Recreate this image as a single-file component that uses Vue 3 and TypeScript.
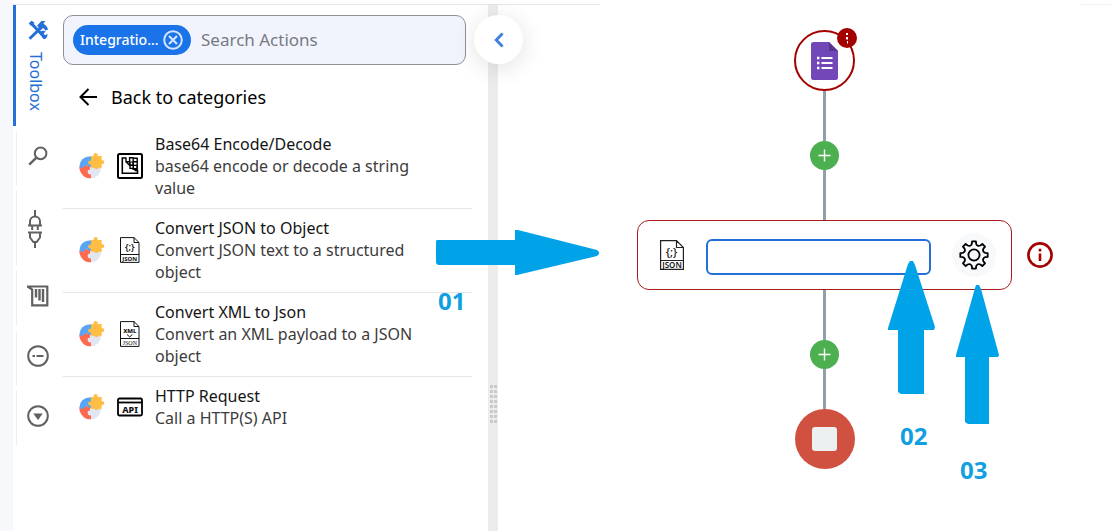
<script setup lang="ts">
import { ref } from 'vue'

interface Action {
  title: string
  description: string
  icon: 'base64' | 'json' | 'xml' | 'api'
}

const actions: Action[] = [
  { title: 'Base64 Encode/Decode', description: 'base64 encode or decode a string value', icon: 'base64' },
  { title: 'Convert JSON to Object', description: 'Convert JSON text to a structured object', icon: 'json' },
  { title: 'Convert XML to Json', description: 'Convert an XML payload to a JSON object', icon: 'xml' },
  { title: 'HTTP Request', description: 'Call a HTTP(S) API', icon: 'api' },
]

const search = ref('')
const stepName = ref('')

function gearOutline(teeth: number, outer: number, inner: number): string {
  const point = (radius: number, degrees: number): string => {
    const a = (degrees * Math.PI) / 180
    return `${(15 + radius * Math.sin(a)).toFixed(2)} ${(15 - radius * Math.cos(a)).toFixed(2)}`
  }
  const step = 360 / teeth
  let d = ''
  for (let i = 0; i < teeth; i++) {
    const c = i * step
    d += `${i === 0 ? 'M' : 'L'}${point(outer, c - 8)}L${point(outer, c + 8)}L${point(inner + 1, c + 11)}`
    d += `Q${point(inner - 1.6, c + step / 2)} ${point(inner + 1, c + step - 11)}`
  }
  return d + 'Z'
}

const gearPath = gearOutline(8, 13.8, 10.4)
</script>

<template>
  <div class="page">
    <div class="edge"></div>
    <div class="workspace">
      <div class="topline"><span class="rule"></span><span class="rule-end"></span></div>
      <div class="body">
        <nav class="rail" aria-label="Panels">
          <button class="tab active" type="button">
            <svg width="20" height="20" viewBox="0 0 20 20" fill="none" stroke="#2470d8">
              <path d="M2.2 2.2 17.4 18.2" stroke-width="3" />
              <path d="M.8 3.4 3.6.8l3 2-3.4 3.2z" fill="#2470d8" stroke="none" />
              <path d="M1.6 18.8 12.6 8" stroke-width="3" />
              <path d="M9.2 5.6 13.4 1h4l-2 2.4 3.6 3.4 1 3-2.6.6-2.2-2.4-3 2.4z" fill="#2470d8" stroke="none" />
              <path d="M12 12.6c1-2 4-2.4 5.6-1l-2 2 1.4 1.6 2.4-1.2c.4 3-1.6 5.4-4.4 4.8z" fill="#2470d8" stroke="none" />
            </svg>
            <span class="tab-text">Toolbox</span>
          </button>
          <button class="tab" type="button" aria-label="Search">
            <svg width="20" height="20" viewBox="0 0 20 20" fill="none" stroke="#616161" stroke-width="2">
              <circle cx="12.6" cy="7.4" r="5.8" />
              <path d="M8.4 11.6 1.2 18.6" stroke-width="2.4" />
            </svg>
          </button>
          <button class="tab tall" type="button" aria-label="Connections">
            <svg class="plug" width="14" height="38" viewBox="0 0 14 38" fill="none" stroke="#616161" stroke-width="2">
              <path d="M7 0v6M2 15v-3.5a5 5 0 0 1 10 0V15M0 15.4h14M4.2 16v4M9.8 16v4" />
              <path d="M0 22.6h14M2 23v4.5L5.4 32h3.2L12 27.5V23M7 32v6" />
            </svg>
          </button>
          <button class="tab" type="button" aria-label="Library">
            <svg width="22" height="22" viewBox="0 0 22 22" fill="none" stroke="#616161" stroke-width="2.2">
              <path d="M.5 1.5H20.3V20.3H5.2V4.6z" />
              <path d="M9 4v8.5M12.5 4v11.5M16 4v13" stroke-width="2.4" />
            </svg>
          </button>
          <button class="tab" type="button" aria-label="Variables">
            <svg width="22" height="22" viewBox="0 0 22 22" fill="none" stroke="#616161" stroke-width="2">
              <circle cx="11" cy="11" r="9.8" />
              <path d="M5.5 11H8M9.5 11h7" />
            </svg>
          </button>
          <button class="tab" type="button" aria-label="More">
            <svg width="22" height="22" viewBox="0 0 22 22" fill="none" stroke="#616161" stroke-width="2">
              <circle cx="11" cy="11" r="9.8" />
              <path d="M6.2 8.6h9.600L11 15z" fill="#616161" stroke="none" />
            </svg>
          </button>
        </nav>

        <section class="panel">
          <div class="search">
            <span class="chip">
              Integratio...
              <button class="chip-close" type="button" aria-label="Remove filter">
                <svg width="20" height="20" viewBox="0 0 20 20" fill="none" stroke="#d3e5fc" stroke-width="2">
                  <circle cx="10" cy="10" r="8.8" />
                  <path d="m6 6 8 8M14 6l-8 8" stroke-width="2.2" />
                </svg>
              </button>
            </span>
            <input v-model="search" class="search-input" type="text" placeholder="Search Actions" aria-label="Search Actions" />
          </div>

          <button class="back" type="button">
            <svg width="18" height="18" viewBox="0 0 18 18" fill="none" stroke="#000" stroke-width="2">
              <path d="M18 9H1.5M9.5 1 1.5 9l8 8" />
            </svg>
            Back to categories
          </button>

          <ul class="actions">
            <li v-for="action in actions" :key="action.title" class="action">
              <svg class="ball" width="26" height="26" viewBox="0 0 78 78">
                <path d="M36 76A34 34 0 0 1 1 42q6-5 11-2 2-8 9-5 7 4 13 5v10q-8-1-7 7 0 7 9 7z" fill="#fc6b50" />
                <path d="M36 76q24 1 32-33L34 40v10q-9-1-8 7 1 7 10 7z" fill="#e2e6f0" />
                <path d="M1 41Q3 11 36 10v10q7-1 8 6 0 7-8 7v8q-7 1-10-3-6-6-9 3-7 6-16 0z" fill="#56a5f6" />
                <path d="M36 9h8q-1-9 6-9 7 0 6 9h12v13q8-2 8 5 0 7-8 6v11H58q0 5-6 4-6 0-6-4H36v-9q-9 1-9-7 1-6 9-5z" fill="#ffbd43" />
              </svg>

              <svg v-if="action.icon === 'base64'" class="glyph" width="26" height="26" viewBox="0 0 26 26" fill="none" stroke="#000">
                <rect x="1" y="1" width="24" height="24" rx="1.5" stroke-width="2" />
                <path d="M9 5H5.3v15.3h15.2V17.500h-3" stroke-width="1.6" />
                <path d="M9 4.500v4.300h3.600V4.800h3.600v4h4V4.500M12.600 8.800v3.600h7.600V8.800M16.200 8.800v7.400h4V13M9 8.800l4 4M13 12.400v3h3.200M17 5.200h3" stroke-width="1.4" />
                <path d="M13 9h3v3h-3zM16.500 12.500H20v3h-3.500z" stroke-width="1" />
              </svg>
              <svg v-else-if="action.icon === 'json'" class="glyph" width="26" height="26" viewBox="0 0 26 26" fill="none" stroke="#111">
                <path d="M3.5.6H17L22 5.5V25.4H3.5zM17 .6V5.5h5M3.5 17.5H22" />
                <text x="12.7" y="13" class="doc-brace">{;}</text>
                <text x="12.8" y="24" class="doc-label">JSON</text>
              </svg>
              <svg v-else-if="action.icon === 'xml'" class="glyph" width="26" height="26" viewBox="0 0 26 26" fill="none" stroke="#111">
                <path d="M3.5.6H17L22 5.5V25.4H3.5zM17 .6V5.5h5M3.5 17.5H22M10 13.5l2.700 2.400 2.700-2.400" />
                <text x="12.8" y="11.8" class="doc-xml">XML</text>
                <text x="12.8" y="23.8" class="doc-serif">JSON</text>
              </svg>
              <svg v-else class="glyph" width="26" height="26" viewBox="0 0 26 26" fill="none" stroke="#000" stroke-width="1.8">
                <rect x="1" y="4.5" width="24" height="17" rx="1.5" />
                <path d="M1 8.5h24" />
                <text x="13" y="18.8" class="api-label">API</text>
              </svg>

              <div class="action-text">
                <div class="action-title">{{ action.title }}</div>
                <div class="action-desc">{{ action.description }}</div>
              </div>
            </li>
          </ul>
        </section>

        <div class="splitter" role="separator" aria-orientation="vertical">
          <button class="collapse" type="button" aria-label="Collapse panel">
            <svg width="10" height="16" viewBox="0 0 10 16" fill="none" stroke="#3c7fe0" stroke-width="2.8">
              <path d="M8.6 1.5 2.2 8l6.400 6.500" />
            </svg>
          </button>
          <span class="grip"><i v-for="n in 16" :key="n"></i></span>
        </div>

        <main class="canvas">
          <div class="start">
            <svg width="27" height="38" viewBox="0 0 27 38">
              <path d="M2.5 0H18l9 9v26.5a2.5 2.5 0 0 1-2.5 2.5h-22A2.5 2.5 0 0 1 0 35.5v-33A2.5 2.5 0 0 1 2.5 0z" fill="#7248b9" />
              <path d="M18 0l9 9h-9z" fill="#55358f" />
              <path d="M10.5 16h11M10.5 21h11M10.5 26h11" stroke="#fff" stroke-width="2.2" />
              <path d="M6 16h2.4M6 21h2.4M6 26h2.4" stroke="#fff" stroke-width="2.6" />
            </svg>
            <span class="alert">
              <svg width="20" height="20" viewBox="0 0 20 20" fill="#fff">
                <path d="M9 5h2v2H9zM9 9h2v2.5H9zM10 13h1v2.5h-1z" />
              </svg>
            </span>
          </div>
          <span class="wire"></span>
          <button class="plus" type="button" aria-label="Add step">
            <svg width="13" height="13" viewBox="0 0 13 13" stroke="#fff" stroke-width="1.4"><path d="M6.5 .5v12M.5 6.5h12" /></svg>
          </button>
          <span class="wire"></span>

          <div class="card">
            <svg class="card-icon" width="24" height="30" viewBox="0 0 24 30" fill="none" stroke="#222" stroke-width="1.2">
              <path d="M.6.6H16.5L23.4 7.5V29.4H.6zM16.5.6V7.5h6.900M.6 20.5H23.4" />
              <text x="11.5" y="15.5" class="card-brace">{;}</text>
              <text x="12" y="28" class="card-label">JSON</text>
            </svg>
            <input v-model="stepName" class="step-input" type="text" aria-label="Step name" />
            <button class="settings" type="button" aria-label="Step settings">
              <svg width="30" height="30" viewBox="0 0 30 30" fill="none" stroke="#000" stroke-width="1.8" stroke-linejoin="round">
                <path :d="gearPath" />
                <circle cx="15" cy="15" r="5.6" />
              </svg>
            </button>
            <svg class="info" width="26" height="26" viewBox="0 0 26 26" fill="none" stroke="#a30000" stroke-width="2.6">
              <circle cx="13" cy="13" r="11.6" />
              <path d="M13 11.5v7.500M13 6.8v2.700" />
            </svg>

            <svg class="arrow-two" width="47" height="133" viewBox="0 0 47 133" fill="#00a2e8">
              <path d="M22 0h3l2 4 20 62-1 3H36v64H13l-3-2V69H0v-2L20 3z" />
            </svg>
            <span class="mark mark-two">02</span>
            <svg class="arrow-three" width="43" height="139" viewBox="0 0 43 139" fill="#00a2e8">
              <path d="M20 0h3l2 4 18 66-1 2h-9v67H12l-3-2V72H0v-2L19 3z" />
            </svg>
            <span class="mark mark-three">03</span>
          </div>

          <span class="wire"></span>
          <button class="plus" type="button" aria-label="Add step">
            <svg width="13" height="13" viewBox="0 0 13 13" stroke="#fff" stroke-width="1.4"><path d="M6.5 .5v12M.5 6.5h12" /></svg>
          </button>
          <span class="wire short"></span>
          <div class="stop"><span></span></div>
        </main>
      </div>
    </div>

    <svg class="arrow-one" width="163" height="45" viewBox="0 0 163 45" fill="#00a2e8">
      <path d="M1 10H79V0h3l79 20 2 2v2l-2 2L81 45h-2V35H2l-2-2V11z" />
    </svg>
    <span class="mark mark-one">01</span>
  </div>
</template>

<style>
body {
  margin: 0;
  background: #fff;
}
</style>

<style scoped>
.page {
  position: relative;
  display: flex;
  min-height: 100vh;
  overflow: hidden;
  font-family: 'Noto Sans', 'Open Sans', sans-serif;
  font-size: 16px;
  line-height: 22px;
  color: #212121;
  background: #fff;
}
.page *,
.page {
  box-sizing: border-box;
}
button {
  display: flex;
  align-items: center;
  justify-content: center;
  padding: 0;
  border: 0;
  background: none;
  font: inherit;
  color: inherit;
}
svg {
  flex: none;
  display: block;
}
.edge {
  flex: none;
  width: 13px;
  background: #f6f8fc;
}
.workspace {
  flex: 1;
  display: flex;
  flex-direction: column;
  min-width: 0;
}
.topline {
  display: flex;
  justify-content: space-between;
  padding-top: 4px;
}
.rule {
  width: 587px;
  height: 1px;
  background: #e6e6e6;
}
.rule-end {
  width: 30px;
  height: 1px;
  background: #f1f1f1;
}
.body {
  flex: 1;
  display: flex;
}

.rail {
  flex: none;
  display: flex;
  flex-direction: column;
  gap: 5px;
  width: 50px;
}
.tab {
  height: 55px;
  margin-left: 3px;
  padding: 0 5px 6px 0;
  border-left: 1px solid #efefef;
}
.tab.tall {
  height: 75px;
  padding: 0 10px 0 0;
}
.tab.active {
  flex-direction: column;
  justify-content: flex-start;
  gap: 12px;
  height: 121px;
  margin-left: 0;
  padding: 15px 4px 0 0;
  border-left: 3px solid #2470d8;
  color: #2470d8;
}
.tab-text {
  margin-right: 4px;
  writing-mode: vertical-rl;
}

.panel {
  flex: none;
  width: 425px;
  padding: 10px 16px 0 0;
}
.search {
  display: flex;
  align-items: center;
  gap: 10px;
  height: 50px;
  margin-right: 6px;
  padding: 0 9px;
  border: 1px solid #8e9096;
  border-radius: 10px;
  background: #f1f4fd;
}
.chip {
  flex: none;
  display: flex;
  align-items: center;
  justify-content: space-between;
  width: 118px;
  height: 30px;
  padding: 0 8px 0 7px;
  border-radius: 15px;
  background: #1a73e8;
  color: #fff;
  font-size: 14px;
  font-weight: 500;
}
.search-input {
  flex: 1;
  min-width: 0;
  padding: 0;
  border: 0;
  outline: 0;
  background: none;
  font: inherit;
  font-size: 17px;
  color: #212121;
}
.search-input::placeholder {
  color: #777a82;
  opacity: 1;
}
.back {
  gap: 14px;
  height: 60px;
  padding: 4px 0 0 16px;
  color: #000;
  font-size: 18px;
}
.actions {
  margin: 0;
  padding: 0;
  list-style: none;
}
.action {
  display: flex;
  align-items: center;
  padding: 8px 24px 9px 16px;
  border-bottom: 1px solid #e6e6e6;
}
.action:last-child {
  border-bottom: 0;
}
.glyph {
  margin-left: 12px;
}
.action-text {
  margin-left: 12px;
}
.action-title {
  color: #141414;
}
.action-desc {
  color: #3c3c3c;
}
.glyph text,
.card-icon text {
  fill: #111;
  stroke: none;
  text-anchor: middle;
}
.doc-brace {
  font-size: 9px;
  font-weight: 600;
}
.doc-label {
  font-size: 6px;
  font-weight: 700;
}
.doc-xml {
  font-size: 6px;
  font-weight: 800;
}
.doc-serif {
  font-family: 'Liberation Serif', serif;
  font-size: 6px;
}
.api-label {
  font-size: 9px;
  font-weight: 800;
}

.splitter {
  position: relative;
  flex: none;
  width: 10px;
  background: #ececec;
}
.collapse {
  position: absolute;
  z-index: 1;
  top: 10px;
  left: -14px;
  width: 49px;
  height: 49px;
  border-radius: 50%;
  background: #fff;
  box-shadow: 0 4px 24px rgba(0, 0, 0, 0.12);
}
.grip {
  position: absolute;
  top: 380px;
  left: 2px;
  display: grid;
  grid-template-columns: 3px 3px;
  gap: 2px 1px;
}
.grip i {
  height: 3px;
  background: #cacaca;
}

.canvas {
  flex: 1;
  display: flex;
  flex-direction: column;
  align-items: center;
  min-width: 0;
  padding: 25px 0 0 40px;
}
.start {
  position: relative;
  display: flex;
  align-items: center;
  justify-content: center;
  width: 61px;
  height: 61px;
  border: 2px solid #a30000;
  border-radius: 50%;
}
.alert {
  position: absolute;
  top: -4px;
  right: -4px;
  border-radius: 50%;
  background: #a30000;
}
.wire {
  width: 3px;
  height: 50px;
  background: #90a0a8;
}
.wire.short {
  height: 40px;
}
.plus {
  width: 29px;
  height: 29px;
  border-radius: 50%;
  background: #4caf50;
}
.card {
  position: relative;
  display: flex;
  align-items: center;
  width: 375px;
  height: 70px;
  padding: 0 15px 0 22px;
  border: 1px solid #a81c1c;
  border-radius: 12px;
  background: #fff;
}
.card-brace {
  font-size: 11px;
  font-weight: 500;
}
.card-label {
  font-size: 8px;
  font-weight: 600;
}
.step-input {
  flex: 1;
  min-width: 0;
  height: 36px;
  margin: 3px 21px 0 22px;
  padding: 0 8px;
  border: 2px solid #2470d8;
  border-radius: 6px;
  outline: 0;
  background: #fff;
  font: inherit;
}
.settings {
  width: 44px;
  height: 44px;
  border-radius: 50%;
  background: #f8f9fb;
}
.info {
  position: absolute;
  top: 21px;
  left: 389px;
}
.arrow-two {
  position: absolute;
  top: 40px;
  left: 250px;
}
.arrow-three {
  position: absolute;
  top: 64px;
  left: 318px;
}
.arrow-one {
  position: absolute;
  z-index: 2;
  top: 230px;
  left: 436px;
}
.mark {
  position: absolute;
  z-index: 2;
  font-family: 'Open Sans', 'Noto Sans', sans-serif;
  font-size: 24px;
  line-height: 24px;
  font-weight: 700;
  color: #109fdf;
}
.mark-one {
  top: 289px;
  left: 438px;
}
.mark-two {
  top: 203px;
  left: 262px;
}
.mark-three {
  top: 237px;
  left: 322px;
}
.stop {
  display: flex;
  align-items: center;
  justify-content: center;
  width: 60px;
  height: 60px;
  border-radius: 50%;
  background: #d15140;
}
.stop span {
  width: 25px;
  height: 24px;
  border-radius: 3px;
  background: #ecf0f1;
}
</style>
